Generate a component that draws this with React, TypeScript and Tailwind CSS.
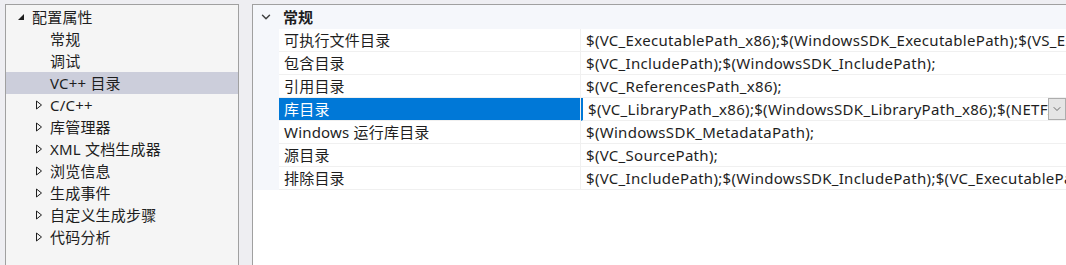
import { ChevronDown } from "lucide-react";

const font = {
  fontFamily: '"Noto Sans", "Noto Sans CJK SC", sans-serif',
};

type TreeItem = {
  label: string;
  level: 0 | 1;
  arrow?: "open" | "closed";
  selected?: boolean;
};

const tree: TreeItem[] = [
  { label: "配置属性", level: 0, arrow: "open" },
  { label: "常规", level: 1 },
  { label: "调试", level: 1 },
  { label: "VC++ 目录", level: 1, selected: true },
  { label: "C/C++", level: 1, arrow: "closed" },
  { label: "库管理器", level: 1, arrow: "closed" },
  { label: "XML 文档生成器", level: 1, arrow: "closed" },
  { label: "浏览信息", level: 1, arrow: "closed" },
  { label: "生成事件", level: 1, arrow: "closed" },
  { label: "自定义生成步骤", level: 1, arrow: "closed" },
  { label: "代码分析", level: 1, arrow: "closed" },
];

const props = [
  ["可执行文件目录", "$(VC_ExecutablePath_x86);$(WindowsSDK_ExecutablePath);$(VS_ExecutablePath);$(MSBuild_ExecutablePath);$(FxCopDir);$(PATH);"],
  ["包含目录", "$(VC_IncludePath);$(WindowsSDK_IncludePath);"],
  ["引用目录", "$(VC_ReferencesPath_x86);"],
  ["库目录", "$(VC_LibraryPath_x86);$(WindowsSDK_LibraryPath_x86);$(NETFXKitsDir)Lib\\um\\x86"],
  ["Windows 运行库目录", "$(WindowsSDK_MetadataPath);"],
  ["源目录", "$(VC_SourcePath);"],
  ["排除目录", "$(VC_IncludePath);$(WindowsSDK_IncludePath);$(VC_ExecutablePath_x86);$(VC_LibraryPath_x86)"],
];

function TreeArrow({ kind }: { kind?: "open" | "closed" }) {
  if (kind === "open") {
    return (
      <svg width="8" height="8" viewBox="0 0 8 8" className="shrink-0">
        <path d="M7 1 L7 7 L1 7 Z" fill="#1e1e1e" />
      </svg>
    );
  }
  if (kind === "closed") {
    return (
      <svg width="8" height="10" viewBox="0 0 8 10" className="shrink-0">
        <path d="M1.5 1 L6.5 5 L1.5 9 Z" fill="none" stroke="#1e1e1e" strokeWidth="1" />
      </svg>
    );
  }
  return <span className="w-2 shrink-0" />;
}

export default function App() {
  return (
    <div
      className="flex h-[265px] w-[1066px] overflow-hidden bg-[#eeeef2] pt-[4px] text-[15px] text-[#1e1e1e]"
      style={font}
    >
      {/* property page tree */}
      <div className="ml-[5px] w-[234px] shrink-0 border-l border-t border-r border-[#a0a0a0] bg-[#f5f5f5] pt-[1px]">
        {tree.map((it) => (
          <div
            key={it.label}
            className={`flex h-[22px] items-center gap-[7px] ${
              it.selected ? "bg-[#cccedb]" : ""
            } ${it.level === 0 ? "pl-[11px]" : "pl-[29px]"}`}
          >
            <TreeArrow kind={it.arrow} />
            <span className="whitespace-nowrap leading-none tracking-[0.2px]">{it.label}</span>
          </div>
        ))}
      </div>

      {/* property grid */}
      <div className="ml-[13px] flex min-w-0 flex-1 flex-col border-l border-t border-[#a0a0a0] bg-white">
        <div className="flex h-[24px] items-center bg-[#f5f7fb]">
          <div className="flex w-[26px] shrink-0 justify-center">
            <ChevronDown size={14} strokeWidth={2.5} color="#404040" />
          </div>
          <span className="pl-[4px] font-bold leading-none">常规</span>
        </div>
        {props.map(([name, value], i) => {
          const sel = i === 3;
          return (
            <div key={name} className="flex h-[23px]">
              <div className="w-[26px] shrink-0 bg-[#f5f7fb]" />
              <div
                className={`flex w-[302px] shrink-0 items-center border-b border-r border-[#f0f0f0] pl-[5px] ${
                  sel ? "bg-[#0078d7] text-white" : ""
                }`}
              >
                <span className="whitespace-nowrap leading-none tracking-[0.2px]">{name}</span>
              </div>
              <div
                className={`relative flex min-w-0 flex-1 items-center overflow-hidden border-b border-[#f0f0f0] pl-[5px] ${
                  sel ? "border-l-2 border-l-[#0078d7] pl-[3px]" : ""
                }`}
              >
                <span className="whitespace-nowrap leading-none tracking-[0.3px]">{value}</span>
                {sel && (
                  <div className="absolute right-0 top-0 flex h-[22px] w-[18px] items-center justify-center border border-[#adadad] bg-[#e5e5e5]">
                    <ChevronDown size={12} strokeWidth={1.5} color="#404040" />
                  </div>
                )}
              </div>
            </div>
          );
        })}
      </div>
    </div>
  );
}
